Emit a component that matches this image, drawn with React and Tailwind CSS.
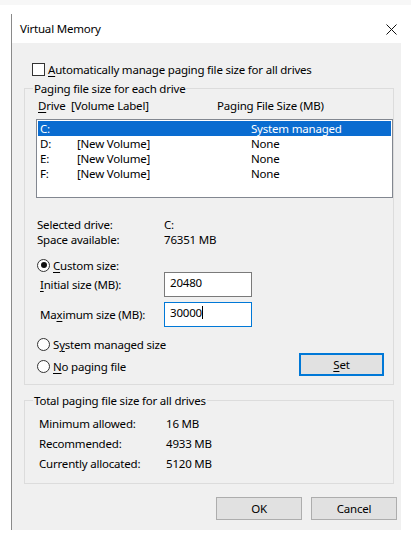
import React from "react";

const drives = [
  { drive: "C:", label: "", size: "System managed", selected: true },
  { drive: "D:", label: "[New Volume]", size: "None" },
  { drive: "E:", label: "[New Volume]", size: "None" },
  { drive: "F:", label: "[New Volume]", size: "None" },
];

function Radio({ checked }) {
  return (
    <span className="w-[13px] h-[13px] rounded-full border border-[#333] bg-white flex items-center justify-center shrink-0">
      {checked && <span className="w-[6px] h-[6px] rounded-full bg-[#111]" />}
    </span>
  );
}

function Button({ children, focused, className = "" }) {
  return (
    <div
      className={`h-[23px] flex items-center justify-center bg-[#e1e1e1] ${
        focused ? "border-2 border-[#0078d7]" : "border border-[#adadad]"
      } ${className}`}
    >
      {children}
    </div>
  );
}

export default function App() {
  return (
    <div className="w-[411px] h-[542px] bg-white text-[11.5px] tracking-[-0.2px] text-black font-['Segoe_UI','Noto_Sans',sans-serif] leading-[15px] overflow-hidden">
      <div className="h-[5px] bg-[#f7f7f7]" />
      <div className="ml-[11px] mt-[9px] w-[400px] border-l border-[#8a8a8a]">
        {/* Title bar */}
        <div className="h-[29px] flex items-center justify-between pl-[8px] pr-[14px] bg-white">
          <span className="pb-[1px]">Virtual Memory</span>
          <svg width="11" height="11" viewBox="0 0 11 11" className="mt-[1px]">
            <path d="M0.5 0.5L10.5 10.5M10.5 0.5L0.5 10.5" stroke="#111" strokeWidth="1" fill="none" />
          </svg>
        </div>

        {/* Dialog body */}
        <div className="w-[389px] h-[487px] bg-[#f0f0f0] flex flex-col">
          <div className="mt-[19px] ml-[20px] h-[15px] flex items-center">
            <span className="w-[13px] h-[13px] border border-[#333] bg-white shrink-0" />
            <span className="ml-[3px]">
              <u className="underline-offset-2">A</u>utomatically manage paging file size for all drives
            </span>
          </div>

          <fieldset className="mt-[4px] ml-[12px] w-[370px] min-w-0 border border-[#dcdcdc] p-0 pb-[8px]">
            <legend className="ml-[8px] px-[1px] h-[15px]">Paging file size for each drive</legend>
            <div className="mt-[2px] ml-[13px] h-[15px] flex">
              <span className="w-[179px]">
                <u className="underline-offset-2">D</u>rive&nbsp; [Volume Label]
              </span>
              <span>Paging File Size (MB)</span>
            </div>

            <div className="mt-[6px] ml-[11px] w-[357px] h-[79px] border border-[#828790] bg-white p-[1px]">
              {drives.map((d) => (
                <div
                  key={d.drive}
                  className={`h-[15px] flex pl-[2px] ${d.selected ? "bg-[#0a6cd0] text-white" : ""}`}
                >
                  <span className="w-[37px]">{d.drive}</span>
                  <span className="w-[174px]">{d.label}</span>
                  <span>{d.size}</span>
                </div>
              ))}
            </div>

            <div className="mt-[19px] ml-[12px] h-[15px] flex">
              <span className="w-[127px]">Selected drive:</span>
              <span>C:</span>
            </div>
            <div className="ml-[12px] h-[15px] flex">
              <span className="w-[127px]">Space available:</span>
              <span>76351 MB</span>
            </div>

            <div className="mt-[11px] ml-[12px] h-[14px] flex items-center">
              <Radio checked />
              <span className="ml-[3px]">
                <u className="underline-offset-2">C</u>ustom size:
              </span>
            </div>

            <div className="ml-[15px] h-[25px] flex items-center">
              <span className="w-[124px]">
                <u className="underline-offset-2">I</u>nitial size (MB):
              </span>
              <div className="w-[88px] h-[25px] border border-[#7a7a7a] bg-white flex items-center pl-[5px] pb-[4px]">
                20480
              </div>
            </div>

            <div className="mt-[5px] ml-[15px] h-[25px] flex items-center">
              <span className="w-[124px]">
                Ma<u className="underline-offset-2">x</u>imum size (MB):
              </span>
              <div className="w-[88px] h-[25px] border border-[#0078d7] bg-white flex items-center pl-[5px] pb-[4px]">
                30000
                <span className="w-[1px] h-[13px] bg-black" />
              </div>
            </div>

            <div className="mt-[10px] ml-[12px] flex items-start">
              <div className="flex flex-col">
                <div className="h-[15px] flex items-center">
                  <Radio />
                  <span className="ml-[3px]">
                    S<u className="underline-offset-2">y</u>stem managed size
                  </span>
                </div>
                <div className="mt-[7px] h-[15px] flex items-center">
                  <Radio />
                  <span className="ml-[3px]">
                    <u className="underline-offset-2">N</u>o paging file
                  </span>
                </div>
              </div>
              <Button focused className="ml-auto mr-[9px] mt-[16px] w-[85px]">
                <span>
                  <u className="underline-offset-2">S</u>et
                </span>
              </Button>
            </div>
          </fieldset>

          <fieldset className="mt-[8px] ml-[12px] w-[370px] min-w-0 border border-[#dcdcdc] p-0 pb-[10px]">
            <legend className="ml-[8px] px-[1px] h-[15px]">Total paging file size for all drives</legend>
            <div className="mt-[5px] ml-[14px] flex flex-col">
              {[
                ["Minimum allowed:", "16 MB"],
                ["Recommended:", "4933 MB"],
                ["Currently allocated:", "5120 MB"],
              ].map(([k, v]) => (
                <div key={k} className="h-[20px] flex items-center">
                  <span className="w-[127px]">{k}</span>
                  <span>{v}</span>
                </div>
              ))}
            </div>
          </fieldset>

          <div className="mt-[13px] pr-[4px] flex justify-end gap-[9px]">
            <Button className="w-[86px]">OK</Button>
            <Button className="w-[86px]">Cancel</Button>
          </div>
        </div>
      </div>
    </div>
  );
}
